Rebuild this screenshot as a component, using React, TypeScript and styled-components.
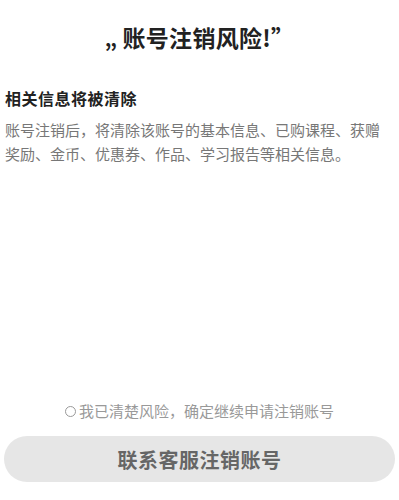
import React, { useState } from 'react';
import styled, { createGlobalStyle } from 'styled-components';

const GlobalStyle = createGlobalStyle`
  html, body {
    margin: 0;
    padding: 0;
    background: #ffffff;
  }
  body {
    font-family: 'Noto Sans CJK SC', 'Noto Sans', sans-serif;
  }
`;

const App = () => {
  const [agreed, setAgreed] = useState(false);

  return (
    <Page>
      <GlobalStyle />
      <Title>
        <Quote>„</Quote>账号注销风险!”
      </Title>
      <Section>
        <Heading>相关信息将被清除</Heading>
        <Body>账号注销后，将清除该账号的基本信息、已购课程、获赠奖励、金币、优惠券、作品、学习报告等相关信息。</Body>
      </Section>
      <Spacer />
      <Agree onClick={() => setAgreed(v => !v)}>
        <Radio checked={agreed} />
        我已清楚风险，确定继续申请注销账号
      </Agree>
      <SubmitButton disabled={!agreed}>联系客服注销账号</SubmitButton>
    </Page>
  );
};

export default App;

const Page = styled.div`
  display: flex;
  flex-direction: column;
  height: 500px;
  padding: 0 4px 18px;
  box-sizing: border-box;
`;

const Title = styled.h1`
  margin: 20px 0 0;
  text-align: center;
  font-size: 23px;
  line-height: 34px;
  font-weight: 700;
  color: #222;
  letter-spacing: 0.3px;
`;

const Quote = styled.span`
  font-size: 22px;
  margin-right: 5px;
`;

const Section = styled.div`
  margin-top: 32px;
  padding: 0 8px 0 1px;
`;

const Heading = styled.h2`
  margin: 0;
  font-size: 16px;
  line-height: 24px;
  font-weight: 700;
  color: #222;
  letter-spacing: 0.5px;
`;

const Body = styled.p`
  margin: 8px 0 0;
  font-size: 15px;
  line-height: 24px;
  color: #777;
`;

const Spacer = styled.div`
  flex: 1;
`;

const Agree = styled.div`
  display: flex;
  align-items: center;
  justify-content: center;
  gap: 3px;
  font-size: 15px;
  line-height: 22px;
  color: #999;
  cursor: pointer;
`;

const Radio = styled.span<{ checked: boolean }>`
  width: 11px;
  height: 11px;
  border: 1px solid #999;
  border-radius: 50%;
  box-sizing: border-box;
  background: ${p => (p.checked ? '#999' : 'transparent')};
`;

const SubmitButton = styled.button`
  margin-top: 14px;
  height: 46px;
  border: 0;
  border-radius: 23px;
  background: #e6e6e6;
  color: #666;
  font-family: 'Noto Sans CJK SC', sans-serif;
  font-size: 20px;
  font-weight: 700;
  letter-spacing: 0.5px;
`;
